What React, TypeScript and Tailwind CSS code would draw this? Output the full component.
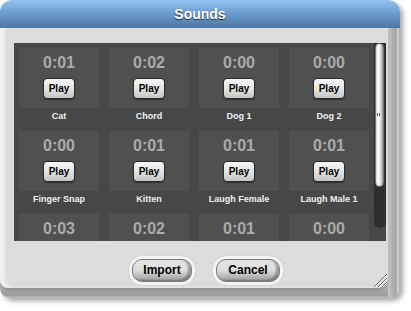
import React from "react";

const sounds: [string, string][] = [
  ["0:01", "Cat"],
  ["0:02", "Chord"],
  ["0:00", "Dog 1"],
  ["0:00", "Dog 2"],
  ["0:00", "Finger Snap"],
  ["0:01", "Kitten"],
  ["0:01", "Laugh Female"],
  ["0:01", "Laugh Male 1"],
  ["0:03", "Laugh Male 2"],
  ["0:02", "Meow"],
  ["0:01", "Owl"],
  ["0:00", "Rooster"],
];

function SoundCell({ time, name }: { time: string; name: string }) {
  return (
    <div className="flex flex-col w-[80px]">
      <div className="h-[60px] bg-[#505050] flex flex-col items-center">
        <div className="pt-[7px] text-[16px] leading-[16px] font-bold text-[#ababab]">{time}</div>
        <div className="mt-[7px] w-[32px] h-[21px] rounded-[4px] border border-[#2a2a2a] bg-[linear-gradient(#f7f7f7,#e2e2e2_55%,#c4c4c4)] shadow-[0_1px_1px_rgba(0,0,0,0.4)] flex items-center justify-center text-[10px] font-bold text-black leading-none">
          Play
        </div>
      </div>
      <div className="h-[23px] text-center text-[9px] leading-[16px] font-bold text-[#f0f0f0] whitespace-nowrap">
        {name}
      </div>
    </div>
  );
}

function BigButton({ label, w }: { label: string; w: string }) {
  return (
    <div className={`${w} h-[29px] rounded-[13px] bg-[#f4f4f4] p-[3px] shadow-[0_0_1px_rgba(0,0,0,0.25)]`}>
      <div className="w-full h-full rounded-[10px] border border-[#7a7a7a] bg-[linear-gradient(#e6e6e6,#dcdcdc_50%,#c0c0c0_72%,#9c9c9c)] shadow-[inset_-3px_-1px_2px_rgba(0,0,0,0.3)] flex items-center justify-center text-[12px] font-bold text-black leading-none pb-[2px]">
        {label}
      </div>
    </div>
  );
}

export default function App() {
  return (
    <div className="w-[411px] h-[311px] bg-white font-['Liberation_Sans',Arial,sans-serif]">
      <div className="w-[400px] h-[298px] flex flex-col rounded-t-[12px] rounded-b-[10px] shadow-[3px_3px_5px_rgba(0,0,0,0.35)]">
        <div className="h-[28px] rounded-t-[12px] bg-[linear-gradient(#92c3f2,#6a9bcc_50%,#4a77a3)] flex items-center justify-center text-white font-bold text-[14px] leading-none [text-shadow:0_1px_1px_rgba(0,0,0,0.7)]">
          Sounds
        </div>
        <div className="flex-1 flex rounded-b-[10px] bg-[linear-gradient(to_bottom,#c8c8c8,#c0c0c0_94%,#9c9c9c_99%,#bebebe)]">
          <div className="flex-1 flex flex-col">
            <div className="flex-1 flex flex-col rounded-br-[10px] rounded-bl-[8px] bg-[#dcdcdc] shadow-[inset_5px_0_3px_rgba(255,255,255,0.6),0_3px_3px_rgba(0,0,0,0.15)] relative">
              <div className="pt-[15px] pl-[14px] pr-[2px]">
                <div className="h-[198px] bg-[#474747] flex overflow-hidden">
                  <div className="w-[360px] pl-[5px] pt-[5px] grid grid-cols-[repeat(4,80px)] gap-x-[10px] content-start">
                    {sounds.map(([t, n], i) => (
                      <SoundCell key={i} time={t} name={n} />
                    ))}
                  </div>
                  <div className="w-[12px] h-[185px] bg-[#2e2e2e] rounded-b-[6px] relative">
                    <div className="ml-[1px] w-[9px] h-[144px] rounded-[5px] bg-[linear-gradient(to_right,#d8d8d8,#ffffff_35%,#d0d0d0_75%,#8a8a8a)] border border-[#777]" />
                    <div className="absolute left-[3px] top-[70px] w-[4px] h-[3px] flex gap-[1px]">
                      <div className="w-[1px] h-[3px] bg-[#555]" />
                      <div className="w-[1px] h-[3px] bg-[#555]" />
                    </div>
                  </div>
                </div>
              </div>
              <div className="mt-[15px] flex justify-center gap-[18px] pl-[12px] mr-[-12px]">
                <BigButton label="Import" w="w-[66px]" />
                <BigButton label="Cancel" w="w-[70px]" />
              </div>
              <svg className="absolute right-0 bottom-0" width="16" height="16" viewBox="0 0 16 16">
                <path d="M2 15 L15 2 M6 15 L15 6 M10 15 L15 10" stroke="#6a6a6a" strokeWidth="1" />
                <path d="M3 15 L15 3 M7 15 L15 7 M11 15 L15 11" stroke="#fafafa" strokeWidth="1" />
              </svg>
            </div>
            <div className="h-[10px]" />
          </div>
          <div className="w-[12px] rounded-br-[10px] bg-[linear-gradient(to_right,#cacaca,#b2b2b2_35%,#a4a4a4_65%,#d8d8d8_85%,#a0a0a0)]" />
        </div>
      </div>
    </div>
  );
}
